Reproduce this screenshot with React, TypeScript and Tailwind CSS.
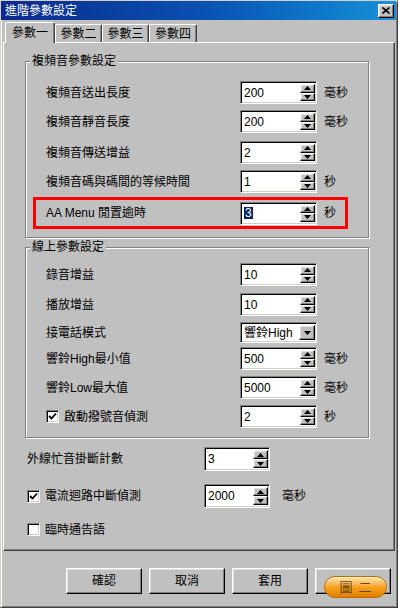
import React from "react";

const sunken =
  "border border-t-[#808080] border-l-[#808080] border-r-white border-b-white shadow-[inset_1px_1px_0_#000,inset_-1px_-1px_0_#d4d0c8]";
const raised =
  "border border-t-white border-l-white border-r-black border-b-black shadow-[inset_-1px_-1px_0_#808080,inset_1px_1px_0_#dfdfdf]";

function Arrow({ up }: { up?: boolean }) {
  return (
    <svg width="7" height="4" viewBox="0 0 7 4">
      {up ? <path d="M3.5 0 L7 4 L0 4 Z" fill="#000" /> : <path d="M0 0 L7 0 L3.5 4 Z" fill="#000" />}
    </svg>
  );
}

function SpinBtn({ up }: { up?: boolean }) {
  return (
    <div className={`flex-1 flex items-center justify-center bg-[#c0c0c0] ${raised}`}>
      <Arrow up={up} />
    </div>
  );
}

function Spin({ value, className, selected }: { value: string; className: string; selected?: boolean }) {
  return (
    <div className={`flex bg-white ${sunken} ${className}`}>
      <div className="flex-1 flex items-center pl-[3px] text-[12px] leading-none text-black">
        {selected ? <span className="bg-[#0a246a] text-white px-[1px]">{value}</span> : value}
      </div>
      <div className="flex flex-col w-[15px] my-[2px] mr-[1px]">
        <SpinBtn up />
        <SpinBtn />
      </div>
    </div>
  );
}

function Check({ checked }: { checked?: boolean }) {
  return (
    <div className={`w-[13px] h-[13px] shrink-0 bg-white flex items-center justify-center ${sunken}`}>
      {checked && (
        <svg width="9" height="9" viewBox="0 0 9 9">
          <path d="M1 4 L3.5 6.5 L8 1.5" stroke="#000" strokeWidth="1.8" fill="none" />
        </svg>
      )}
    </div>
  );
}

function Row({ label, value, unit, className = "", check, selected }: { label: string; value: string; unit?: string; className?: string; check?: boolean; selected?: boolean }) {
  return (
    <div className={`flex items-center h-[23px] ${className}`}>
      <div className="w-[194px] flex items-center gap-[5px]">
        {check && <Check checked />}
        <span>{label}</span>
      </div>
      <Spin value={value} className="w-[77px] h-[23px]" selected={selected} />
      {unit && <span className="ml-[7px]">{unit}</span>}
    </div>
  );
}

function Group({ title, className, children }: { title: string; className: string; children: React.ReactNode }) {
  return (
    <div className={`relative border border-[#808080] shadow-[inset_1px_1px_0_#fff,1px_1px_0_#fff] ${className}`}>
      <span className="absolute -top-[7px] left-[4px] px-[2px] bg-[#c0c0c0] leading-[13px]">{title}</span>
      {children}
    </div>
  );
}

export default function App() {
  return (
    <div className="w-[398px] h-[608px] bg-[#c0c0c0] flex flex-col border border-t-[#d4d0c8] border-l-[#d4d0c8] border-r-[#404040] border-b-[#404040] shadow-[inset_1px_1px_0_#fff,inset_-1px_-1px_0_#808080] text-[12px] text-black font-['Liberation_Sans','Noto_Sans_CJK_TC',sans-serif] overflow-hidden">
      {/* title bar */}
      <div className="h-[19px] mr-[1px] flex items-center justify-between bg-gradient-to-r from-[#0a2a8c] via-[#0a50b0] to-[#1890d8] pl-[4px] pr-[2px]">
        <span className="text-white leading-none">進階參數設定</span>
        <div className={`w-[16px] h-[14px] bg-[#c0c0c0] flex items-center justify-center ${raised}`}>
          <svg width="8" height="7" viewBox="0 0 8 7">
            <path d="M0.5 0.5 L7.5 6.5 M7.5 0.5 L0.5 6.5" stroke="#000" strokeWidth="1.6" />
          </svg>
        </div>
      </div>

      {/* tabs */}
      <div className="flex items-end h-[22px] pl-[4px]">
        <div className="relative z-10 -mb-[1px] w-[50px] h-[21px] bg-[#c0c0c0] rounded-t-[2px] border-t border-l border-r border-t-white border-l-white border-r-[#404040] shadow-[inset_-1px_0_0_#808080] flex items-center justify-center">
          參數一
        </div>
        <div className="w-[47px] h-[18px] rounded-t-[2px] border-t border-l border-r border-t-white border-l-white border-r-[#404040] shadow-[inset_-1px_0_0_#808080] flex items-center justify-center">
          參數二
        </div>
        <div className="w-[47px] h-[18px] rounded-t-[2px] border-t border-l border-r border-t-white border-l-white border-r-[#404040] shadow-[inset_-1px_0_0_#808080] flex items-center justify-center">
          參數三
        </div>
        <div className="w-[48px] h-[18px] rounded-t-[2px] border-t border-l border-r border-t-white border-l-white border-r-[#404040] shadow-[inset_-1px_0_0_#808080] flex items-center justify-center">
          參數四
        </div>
      </div>

      {/* tab panel */}
      <div className="ml-[2px] w-[392px] h-[509px] border border-t-white border-l-white border-r-[#404040] border-b-[#404040] shadow-[inset_-1px_-1px_0_#808080] flex flex-col">
        <Group title="複頻音參數設定" className="ml-[21px] mt-[18px] w-[344px] h-[177px] pt-[19px]">
          <Row label="複頻音送出長度" value="200" unit="毫秒" className="pl-[20px]" />
          <Row label="複頻音靜音長度" value="200" unit="毫秒" className="pl-[20px] mt-[6px]" />
          <Row label="複頻音傳送增益" value="2" className="pl-[20px] mt-[8px]" />
          <Row label="複頻音碼與碼間的等候時間" value="1" unit="秒" className="pl-[20px] mt-[6px]" />
          <div className="ml-[7px] mt-[4px] w-[315px] h-[32px] border-[3px] border-[#ff0000] flex items-center">
            <Row label="AA Menu 閒置逾時" value="3" unit="秒" selected className="pl-[10px]" />
          </div>
        </Group>

        <Group title="線上參數設定" className="ml-[21px] mt-[9px] w-[344px] h-[191px] pt-[15px]">
          <Row label="錄音增益" value="10" className="pl-[20px]" />
          <Row label="播放增益" value="10" className="pl-[20px] mt-[7px]" />
          <div className="flex items-center h-[21px] pl-[20px] mt-[6px]">
            <span className="w-[194px]">接電話模式</span>
            <div className={`w-[77px] h-[21px] flex bg-white ${sunken}`}>
              <span className="flex-1 flex items-center pl-[3px] leading-none">響鈴High</span>
              <div className={`w-[16px] my-[2px] mr-[1px] flex items-center justify-center bg-[#c0c0c0] ${raised}`}>
                <Arrow />
              </div>
            </div>
          </div>
          <Row label="響鈴High最小值" value="500" unit="毫秒" className="pl-[20px] mt-[4px]" />
          <Row label="響鈴Low最大值" value="5000" unit="毫秒" className="pl-[20px] mt-[6px]" />
          <Row label="啟動撥號音偵測" value="2" unit="秒" check className="pl-[20px] mt-[6px]" />
        </Group>

        <div className="flex items-center h-[24px] pl-[23px] mt-[9px]">
          <span className="w-[177px]">外線忙音掛斷計數</span>
          <Spin value="3" className="w-[66px] h-[24px]" />
        </div>
        <div className="flex items-center h-[24px] pl-[23px] mt-[13px]">
          <div className="w-[177px] flex items-center gap-[5px]">
            <Check checked />
            <span>電流迴路中斷偵測</span>
          </div>
          <Spin value="2000" className="w-[66px] h-[24px]" />
          <span className="ml-[12px]">毫秒</span>
        </div>
        <div className="flex items-center h-[13px] pl-[23px] mt-[15px] gap-[5px]">
          <Check />
          <span>臨時通告語</span>
        </div>
      </div>

      {/* buttons */}
      <div className="flex gap-[7px] pl-[65px] mt-[17px]">
        <button className={`w-[76px] h-[26px] bg-[#c0c0c0] ${raised}`}>確認</button>
        <button className={`w-[76px] h-[26px] bg-[#c0c0c0] ${raised}`}>取消</button>
        <button className={`w-[76px] h-[26px] bg-[#c0c0c0] ${raised}`}>套用</button>
        <button className={`w-[76px] h-[26px] bg-[#c0c0c0] flex items-center justify-center ${raised}`}>
          <div className="mt-[12px] ml-[5px] w-[63px] h-[22px] shrink-0 rounded-full border border-[#c26a00] bg-gradient-to-b from-[#ffe7a8] via-[#f7a21c] to-[#e08000] shadow-[inset_0_1px_0_#fff3c8] flex items-center justify-center gap-[6px] text-[13px] text-[#6b4716] leading-none">
            <span>圖</span>
            <span>二</span>
          </div>
        </button>
      </div>
    </div>
  );
}
